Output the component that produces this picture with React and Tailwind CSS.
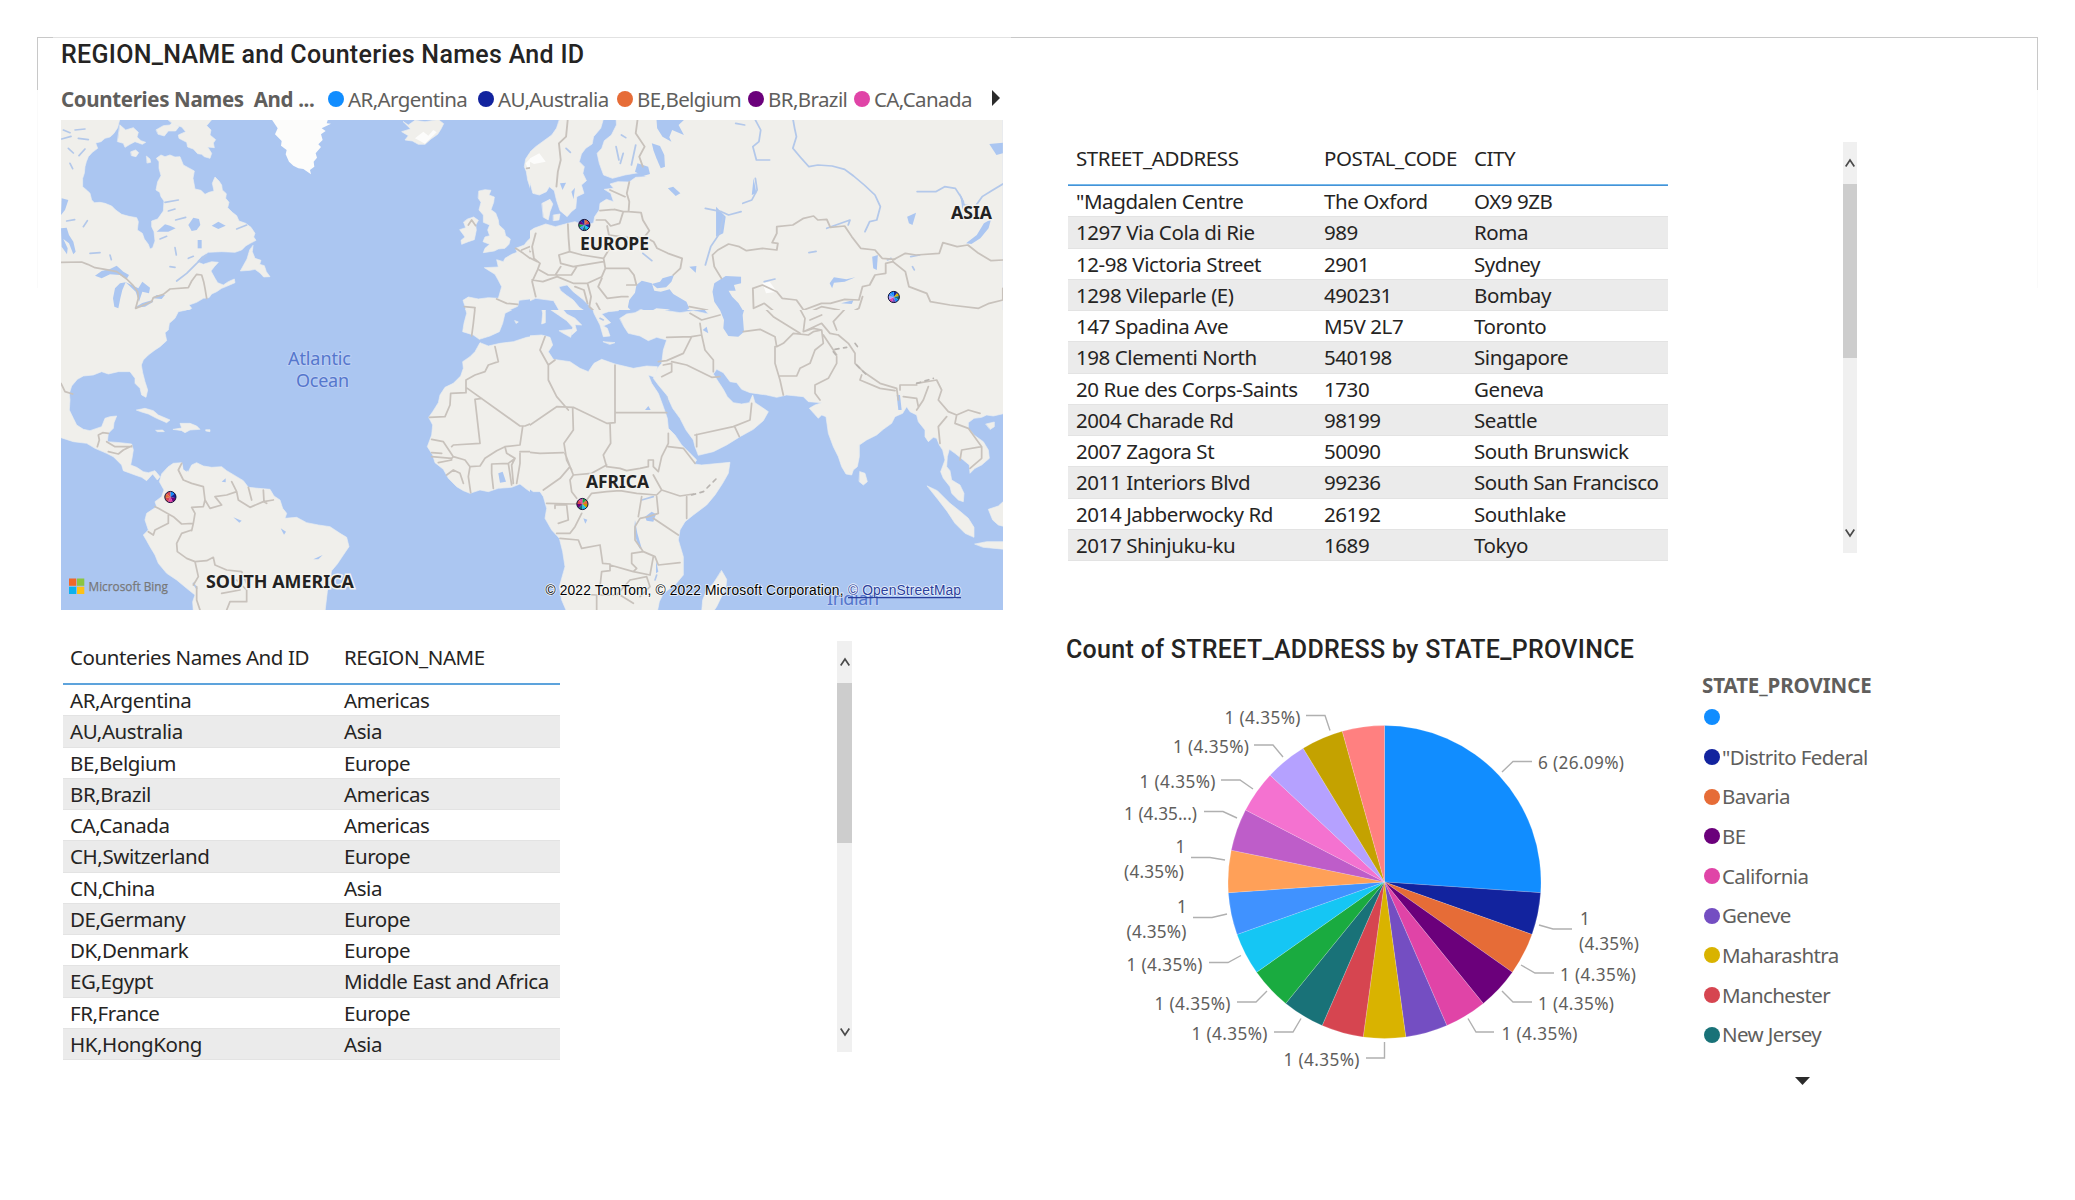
import React from "react";

const SANS = "font-['Noto_Sans','Open_Sans',sans-serif]";

const countryRows = [
  ["AR,Argentina", "Americas"],
  ["AU,Australia", "Asia"],
  ["BE,Belgium", "Europe"],
  ["BR,Brazil", "Americas"],
  ["CA,Canada", "Americas"],
  ["CH,Switzerland", "Europe"],
  ["CN,China", "Asia"],
  ["DE,Germany", "Europe"],
  ["DK,Denmark", "Europe"],
  ["EG,Egypt", "Middle East and Africa"],
  ["FR,France", "Europe"],
  ["HK,HongKong", "Asia"],
];

const addressRows = [
  ['"Magdalen Centre', "The Oxford", "OX9 9ZB"],
  ["1297 Via Cola di Rie", "989", "Roma"],
  ["12-98 Victoria Street", "2901", "Sydney"],
  ["1298 Vileparle (E)", "490231", "Bombay"],
  ["147 Spadina Ave", "M5V 2L7", "Toronto"],
  ["198 Clementi North", "540198", "Singapore"],
  ["20 Rue des Corps-Saints", "1730", "Geneva"],
  ["2004 Charade Rd", "98199", "Seattle"],
  ["2007 Zagora St", "50090", "South Brunswick"],
  ["2011 Interiors Blvd", "99236", "South San Francisco"],
  ["2014 Jabberwocky Rd", "26192", "Southlake"],
  ["2017 Shinjuku-ku", "1689", "Tokyo"],
];

const mapLegend = [
  ["AR,Argentina", "bg-[#118dff]", "w-[150px]"],
  ["AU,Australia", "bg-[#12239e]", "w-[139px]"],
  ["BE,Belgium", "bg-[#e66c37]", "w-[131px]"],
  ["BR,Brazil", "bg-[#6b007b]", "w-[106px]"],
  ["CA,Canada", "bg-[#e044a7]", "w-[137px]"],
];

const stateLegend = [
  ["", "bg-[#118dff]"],
  ['"Distrito Federal', "bg-[#12239e]"],
  ["Bavaria", "bg-[#e66c37]"],
  ["BE", "bg-[#6b007b]"],
  ["California", "bg-[#e044a7]"],
  ["Geneve", "bg-[#744ec2]"],
  ["Maharashtra", "bg-[#d9b300]"],
  ["Manchester", "bg-[#d64550]"],
  ["New Jersey", "bg-[#197278]"],
];

const slices = [
  [6, "#118dff"], [1, "#12239e"], [1, "#e66c37"], [1, "#6b007b"], [1, "#e044a7"],
  [1, "#744ec2"], [1, "#d9b300"], [1, "#d64550"], [1, "#197278"], [1, "#1aab40"],
  [1, "#15c6f4"], [1, "#4092ff"], [1, "#ffa058"], [1, "#be5dc9"], [1, "#f472d0"],
  [1, "#b5a1ff"], [1, "#c4a200"], [1, "#ff8080"],
];

const leaders = [
  "1502,772 1513,761.5 1532,761.5",
  "1539,925 1553,929 1572,929",
  "1521,965 1535,973 1554,973",
  "1502,991 1513,1002 1532,1002",
  "1468,1018.5 1476,1032 1494,1032",
  "1384.5,1042 1384.5,1058 1366,1058",
  "1301,1018.5 1293,1032 1274,1032",
  "1267,991 1256,1002 1237,1002",
  "1241,955.5 1228,962.5 1209,962.5",
  "1227,914 1212,917.5 1193,917.5",
  "1225,860 1210,857.5 1191,857.5",
  "1237,818 1223,811.5 1204,811.5",
  "1253,789 1240,780 1221,780",
  "1283,757 1273,745 1254,745",
  "1330,730.5 1325,715.5 1306,715.5",
];

const pieLabels = [
  [1538, 768.5, "6 (26.09%)", 86],
  [1580, 925, "1", 0],
  [1579, 950, "(4.35%)", 60],
  [1560, 981, "1 (4.35%)", 76],
  [1538, 1010, "1 (4.35%)", 76],
  [1501.5, 1040, "1 (4.35%)", 76],
  [1283.5, 1066, "1 (4.35%)", 76],
  [1191.5, 1040, "1 (4.35%)", 76],
  [1154.5, 1010, "1 (4.35%)", 76],
  [1126.5, 971, "1 (4.35%)", 76],
  [1177, 913, "1", 0],
  [1126.5, 938, "(4.35%)", 60],
  [1175.5, 853, "1", 0],
  [1124, 878, "(4.35%)", 60],
  [1124, 819.5, "1 (4.35...)", 73],
  [1139.5, 788, "1 (4.35%)", 76],
  [1173, 753, "1 (4.35%)", 76],
  [1224.5, 724, "1 (4.35%)", 76],
];

function wedge(cx, cy, r, from, to) {
  const at = (t) => {
    const a = t * Math.PI * 2 - Math.PI / 2;
    return `${(cx + r * Math.cos(a)).toFixed(2)},${(cy + r * Math.sin(a)).toFixed(2)}`;
  };
  return `M${cx},${cy} L${at(from)} A${r},${r} 0 ${to - from > 0.5 ? 1 : 0} 1 ${at(to)} Z`;
}

function Pie({ cx, cy, r, data, stroke }) {
  const total = data.reduce((s, d) => s + d[0], 0);
  let acc = 0;
  return (
    <g stroke={stroke} strokeWidth="0.5">
      {data.map(([v, c], i) => {
        const d = wedge(cx, cy, r, acc / total, (acc + v) / total);
        acc += v;
        return <path key={i} d={d} fill={c} />;
      })}
    </g>
  );
}

const markers = [
  [584.3, 225, ["#e66c37", "#d64550", "#12239e", "#15c6f4", "#197278", "#4092ff", "#1aab40", "#6b007b", "#12239e"]],
  [893.8, 297, ["#12239e", "#d9b300", "#197278", "#118dff", "#744ec2", "#e044a7", "#b5a1ff", "#4092ff", "#118dff"]],
  [170.4, 497, ["#118dff", "#12239e", "#6b007b", "#e044a7", "#d64550", "#e66c37", "#d64550"]],
  [582.4, 504, ["#1aab40", "#e66c37", "#c4a200", "#15c6f4", "#197278", "#6b007b", "#d64550", "#e044a7"]],
];

/* Land outlines, lakes and borders, split in four quadrants that share the map's page coordinates. */
const quadrants = [
  {
    id: "nw", clip: [61, 120, 469, 190], transform: "translate(55 115) scale(0.33333)",
    land: [
      "M18,10 L195,10 188,38 176,56 165,66 150,70 138,80 122,84 128,100 112,112 100,125 94,140 90,155 88,175 83,190 83,215 98,228 105,235 110,255 118,263 135,262 150,265 170,273 182,285 200,298 222,304 245,308 250,320 247,345 262,355 268,372 280,388 285,402 293,398 300,378 297,350 290,335 290,318 308,312 325,288 327,258 318,245 314,232 303,225 308,200 318,182 312,160 312,140 304,130 318,120 330,125 345,120 360,126 375,125 385,150 400,158 418,168 414,190 420,222 438,226 450,238 462,232 477,228 472,205 480,186 492,198 500,210 502,225 514,236 512,250 522,262 518,278 532,292 545,302 552,318 572,325 588,337 600,355 596,366 603,376 586,385 573,392 560,405 540,412 500,410 460,412 440,424 425,440 445,448 470,440 490,442 478,455 468,468 480,490 488,503 505,510 520,500 538,492 540,503 515,514 500,520 485,530 470,537 462,548 445,550 425,562 402,570 410,580 395,590 385,610 18,610Z",
      "M594,392 L592,410 600,430 618,436 614,448 628,452 634,470 645,485 626,486 615,474 600,463 585,466 556,468 566,450 576,432 584,405Z",
      "M195,30 L212,45 235,38 250,52 246,66 258,77 272,82 262,88 240,80 225,88 210,97 205,85 188,80Z",
      "M228,110 l14,-5 9,8 -8,12 -13,-3z", "M275,124 l10,8 2,10 -10,2z",
      "M304,44 L325,32 345,30 352,22 372,35 362,48 340,48 328,63 310,58Z",
      "M335,10 L450,10 470,14 455,32 468,45 465,60 482,74 475,84 478,98 458,96 470,115 465,130 448,125 440,118 428,116 415,102 398,96 395,82 372,70 370,60 392,50 380,36 355,28Z",
      "M1045,20 L1060,30 1080,16 1110,20 1150,14 1166,26 1158,42 1148,58 1128,72 1110,88 1090,88 1072,78 1050,75 1060,62 1040,50 1066,42Z",
      "M1272,228 L1290,224 1308,226 1302,240 1318,246 1316,262 1308,284 1322,294 1330,315 1332,330 1348,345 1352,362 1366,372 1362,388 1350,400 1330,402 1318,408 1285,413 1290,400 1304,388 1284,380 1290,366 1304,362 1298,345 1304,330 1285,322 1285,300 1272,285 1278,262 1270,250Z",
      "M1238,312 L1256,306 1270,316 1262,330 1264,345 1258,374 1240,380 1220,388 1218,376 1230,366 1214,344 1232,338 1226,322Z",
      "M1510,50 L1482,72 1465,88 1445,102 1425,112 1412,132 1408,155 1414,170 1418,195 1426,220 1430,235 1446,242 1462,230 1480,222 1510,205Z",
      "M1510,250 L1480,256 1464,264 1458,285 1462,300 1470,318 1465,335 1444,345 1438,358 1415,380 1408,390 1382,400 1386,412 1370,418 1350,430 1345,440 1325,434 1330,456 1288,458 1320,478 1330,496 1340,515 1330,550 1300,548 1270,552 1240,546 1224,556 1232,580 1226,610 1340,610 1352,590 1388,574 1392,556 1440,550 1450,555 1475,545 1510,552Z",
    ],
    ice: ["M648,10 L820,10 815,25 828,26 800,40 812,48 798,58 803,75 790,88 798,96 782,115 786,128 776,140 778,155 765,165 768,178 745,162 730,160 715,152 702,140 692,118 695,105 678,92 680,78 660,58 668,40Z", "M1080,70 L1105,50 1120,62 1135,45 1145,52 1110,86Z", "M1412,145 L1440,115 1450,125 1468,135 1440,150 1418,160Z"],
    water: [
      "M120,482 L140,468 165,462 185,452 205,470 222,480 215,492 195,480 165,478 140,490Z",
      "M180,520 L195,505 212,502 202,525 196,550 190,580 178,575 174,550Z",
      "M212,502 L235,512 250,520 262,500 285,518 282,535 262,530 252,560 242,530Z",
      "M238,578 L262,564 290,556 295,560 270,575Z", "M292,550 L305,540 330,540 320,552Z",
      "M18,340 L35,338 42,360 55,380 62,410 55,418 42,385 25,372 38,400 36,418 20,395Z",
      "M20,250 L40,255 30,285 18,300Z",
      "M305,350 L330,328 345,332 362,340 340,350Z", "M400,330 L415,308 432,312 436,330 425,345 410,348Z", "M470,332 L490,320 512,332 490,342Z", "M428,375h12v25h-12z",
    ],
    streams: [
      "M455,420 L425,445 395,475 365,498", "M330,262 L370,255", "M340,288 l20,-6", "M362,315 l30,-8", "M545,342 l30,-12", "M315,372 l20,-8", "M345,455 l15,2", "M360,398 l4,22", "M400,430 l15,-6", "M25,45 l20,8 M60,45 l30,-3 M70,70 l30,4 M20,72 l28,-8 M40,100 l15,14 M72,122 l18,-20 M45,145 l8,16 M35,318 l24,-4 M85,335 l12,-18 M105,415 l30,-2 M165,420 l4,14",
    ],
    borders: [
      "M18,442 L80,441 98,448 120,458 150,463 185,470 215,492 235,512 248,530 250,550 242,580 270,568 290,560 295,548 325,538 345,522 400,518 410,498 425,478 440,480 446,500 450,520 455,550",
      "M1240,330 L1250,315 1262,332", "M1382,400 L1405,415 1425,430 1452,440 1448,462 1430,495 M1445,355 L1432,385 1425,410 M1400,405 L1425,395 M1430,495 L1440,545 M1430,495 L1455,500 1480,492 1505,480 M1448,465 L1470,480 1500,475 M1325,552 L1355,565 1388,568 M1228,575 L1260,578 1255,610 M1415,160 L1450,155",
    ],
  },
  {
    id: "ne", clip: [530, 120, 473, 190], transform: "translate(500 20) scale(0.35714 0.33333)",
    land: [
      "M168,295 L290,295 282,325 262,350 258,372 240,385 228,402 222,425 236,440 232,460 242,482 228,495 235,520 215,530 212,565 200,575 188,590 168,572 158,540 152,512 138,500 130,515 110,525 92,520 82,480 75,440 70,410 100,380 145,345 158,325Z",
      "M325,295 L326,315 312,345 292,362 285,385 272,400 278,430 290,465 315,475 350,465 388,458 410,470 380,472 362,486 330,485 308,492 318,505 292,508 310,520 318,545 298,538 280,550 278,570 265,590 262,608 240,618 210,605 190,610 155,620 128,612 95,625 75,640 65,662 45,680 25,700 0,725 0,850 30,858 72,848 100,835 120,838 150,842 165,870 200,905 270,905 255,895 240,875 222,862 205,840 185,825 170,812 165,800 188,795 205,815 232,838 255,862 275,905 600,905 1408,905 1408,295Z",
      "M118,550 L140,538 148,552 140,575 135,600 122,592Z", "M150,585 L168,582 165,600 150,602Z",
    ],
    ice: ["M75,420 L110,400 128,425 95,432Z", "M735,790 L755,785 775,815 745,820Z"],
    water: [
      "M438,295 L520,295 500,315 515,345 482,330 474,352 480,365 455,350 440,325Z",
      "M385,430 L415,440 420,462 400,468 378,455Z", "M425,370 L448,378 460,405 462,440 450,445 438,415 430,392Z",
      "M397,782 L425,790 432,812 450,815 475,808 485,822 522,845 530,865 510,880 470,868 438,865 420,875 395,868 370,875 358,862 362,840 378,818 382,795Z",
      "M425,792 L448,785 455,775 487,765 480,785 465,802 440,805Z",
      "M600,790 L632,768 675,770 675,790 655,795 660,812 640,812 650,830 668,850 685,880 692,905 625,905 622,880 600,845 595,815Z",
      "M280,905 L295,885 340,888 375,878 370,890 335,905Z",
      "M923,790 L935,772 970,778 995,772 965,785 935,788 930,805Z", "M1305,670 L1335,645 1355,610 1375,598 1368,625 1345,655 1320,672Z",
      "M1370,372 L1408,368 1408,400 1390,405Z", "M470,505 L485,500 505,520 492,528Z", "M605,560 L632,590 625,640 605,650Z", "M1042,710 L1058,705 1055,750 1045,745Z", "M1140,590 L1165,578 1155,615 1145,610Z", "M955,850 L990,840 985,852Z",
      "M710,475 L718,520 705,525Z", "M1288,520 L1300,545 1295,570Z", "M168,490 L185,488 175,510Z", "M200,515 l10,-12 -4,35z", "M530,740 L550,738 548,758Z",
    ],
    streams: [
      "M820,295 L825,325 830,350 820,385 840,410 865,440 890,435 930,438 965,448 990,468 1020,495 1050,525 1065,560 1055,600 1035,605 1022,635", "M715,300 L730,330 725,365 708,380 718,420 755,420", "M715,475 L720,510 705,540 680,550", "M575,565 L620,575 640,585 675,575 M625,590 L615,640 590,680 575,735", "M1168,515 L1220,515 1245,500 1275,505 1290,530 1300,555 1330,560 1350,530 1380,510 1408,492", "M915,625 L980,600 975,615 M1085,720 l10,-5 M400,700 l25,22 M340,345 l12,8 M325,380 l8,40 M345,400 l-8,30 M380,375 l-12,60 M185,385 l12,12 M1150,710 l25,-5 M1155,740 l5,10 M865,698 l20,-4 M660,310 l25,5 M740,785 l30,-8",
    ],
    borders: [
      "M190,295 L185,350 165,370 170,420 162,455 158,500", "M385,300 L380,340 405,380 390,410 400,440", "M362,486 L355,520 362,545 360,575 345,575 320,568 280,572 M308,510 L350,530 M320,568 L345,575 335,610 310,618 295,600 270,600 M360,575 L395,578 400,600 418,632 405,650 430,665 440,685 470,700 510,715 505,745 485,765",
      "M190,612 L192,655 195,695 230,705 290,715 310,680 305,645 300,618 M305,645 L375,655 405,650 M290,715 L295,745 340,745 360,745 375,765 382,795 355,795 M195,695 L165,705 170,730 205,740 290,725 M170,740 L155,765 200,765 215,740 M110,750 L135,765 165,765 M60,680 L85,695 M100,640 L90,680 95,715 112,730 105,750 90,785 100,830 M40,690 L105,725 M90,780 L120,785 160,770 M160,770 L205,790 245,790 285,770 295,745 M245,790 L255,830 250,860 270,880 M285,775 L275,800 300,835 340,830 358,830 M210,800 L235,810 245,850 M270,850 L285,880 345,875 M530,860 L580,870 605,890 M550,885 L580,900",
      "M620,775 L600,740 595,705 610,690 640,672 670,680 690,692 735,685 775,690 778,670 762,668 775,640 775,620 820,615 850,595 878,588 890,600 915,598 925,622 965,618 985,650 1010,685 1050,690 1070,715 1105,718",
      "M1100,720 L1135,700 1165,705 1230,700 1240,668 1280,680 1310,675 1340,700 1375,722 1408,720",
      "M1100,725 L1135,755 1145,800 1195,820 1205,845 1260,855 1340,865 1370,850 1408,840 1408,805",
      "M710,865 L708,805 735,795 775,815 790,835 830,840 850,870 900,850 925,850 965,838 1005,840 1015,800 1035,795 1050,765 1080,760 1080,730 1100,725 M710,865 L740,850 780,885 M860,880 L900,860 950,870 M885,905 L920,880 945,890 M1015,830 L1005,865 950,895",
    ],
  },
  {
    id: "sw", clip: [61, 310, 469, 300], transform: "translate(40 300) scale(0.33333)",
    land: [
      "M60,-10 L450,-10 448,20 440,30 415,35 405,55 388,70 385,90 375,98 380,122 360,140 345,150 325,165 310,180 304,195 308,218 315,245 323,270 318,292 305,285 300,265 285,250 285,235 270,215 235,215 205,222 185,215 160,225 130,228 112,238 95,258 88,280 90,300 88,330 100,355 110,375 130,388 150,392 185,380 195,355 210,350 230,348 222,368 220,385 205,400 202,425 240,428 275,432 280,450 276,475 272,495 290,502 310,515 325,518 345,512 360,530 352,540 338,522 320,542 305,532 285,525 250,512 245,495 220,470 200,460 165,445 140,430 100,425 60,412Z",
      "M290,330 L315,325 340,332 355,345 390,360 380,368 350,355 325,342 305,336Z", "M400,388 L425,384 420,370 450,370 470,378 480,388 450,390 435,398 425,392Z", "M498,389 l12,0 0,6 -12,-2z", "M348,391 l20,-1 5,5 -20,0z",
      "M385,500 L400,490 425,488 430,505 445,515 455,495 470,488 490,498 515,502 545,500 560,512 590,530 610,542 625,562 655,565 690,568 702,588 720,600 728,625 740,640 735,655 770,652 800,668 835,675 870,680 900,700 920,712 927,740 910,765 892,792 875,812 868,840 862,875 855,935 460,935 458,905 465,885 440,865 410,840 380,820 355,790 345,765 330,740 320,722 310,705 325,690 315,660 320,640 350,620 345,605 365,590 372,570 358,545 365,522Z",
      "M1268,-10 L1275,20 1280,40 1272,70 1268,95 1300,105 1318,118 1350,108 1378,95 1388,70 1395,40 1415,30 1435,12 1430,-10Z",
      "M1510,105 L1460,112 1420,125 1380,130 1345,138 1320,128 1305,155 1290,170 1268,185 1270,205 1262,228 1240,250 1215,262 1200,285 1195,308 1178,335 1166,352 1178,375 1175,405 1162,440 1178,465 1185,488 1210,508 1225,535 1250,560 1270,572 1290,580 1320,570 1345,575 1375,565 1415,562 1440,552 1460,568 1475,578 1510,580Z",
      "M1425,62l10,4 -6,4z",
    ],
    ice: [],
    water: ["M430,488 L442,488 440,515 430,508Z", "M220,-10 L242,-10 238,25 222,22Z", "M290,25 L310,5 345,-5 335,15 300,25Z", "M1375,520 L1388,515 1398,545 1380,548Z", "M580,652 L605,662 598,668Z", "M722,685 L738,695 732,704Z", "M820,778 L848,765 835,778Z", "M545,545 l12,-10 0,12z"],
    streams: ["M460,850 l10,15"],
    borders: [
      "M63,250 L75,275 98,282", "M172,440 L178,420 175,405 188,398 205,400 M200,425 L225,440 275,440 M205,455 L235,462 250,450 275,438",
      "M425,490 L415,510 430,540 455,550 490,560 495,600 490,620 455,622 465,640 460,670 425,672 400,650 355,625 345,620 M460,670 L455,692 M385,645 L385,670 345,690 340,705 325,695 M455,690 L425,700 410,730 412,755 440,775 465,785 500,782 520,772 525,795 560,810 605,815 620,850 M495,600 L510,625 545,615 525,590 560,585 590,575 575,545 M590,575 L595,600 630,622 670,605 700,600 M625,562 L635,600 M670,570 L672,605 680,610 M465,785 L475,830 460,855 M470,860 L470,900 480,930 M560,930 L570,905 620,905 620,870 590,840 M545,880 L600,870",
      "M1275,22 L1305,25 1300,70 1295,108 M1380,0 L1430,15 M1365,140 L1375,185 1345,195 1335,215 1305,225 1278,240 1278,278 1232,280 1230,315 1215,350 1168,352 M1278,262 L1440,378 1455,378 1500,360 M1325,295 L1305,298 1320,430 1240,435 1235,440 M1175,418 L1210,425 1240,470 M1175,458 L1205,460 M1175,470 L1235,475 1240,470 1275,480 1290,500 M1195,488 L1235,480 M1220,525 L1240,510 1260,520 1270,550 M1290,500 L1285,530 1292,578 M1290,500 L1320,498 1335,475 1370,452 1395,440 1440,435 1448,380 M1395,440 L1400,460 1425,475 1405,490 1355,492 1355,520 1360,565 M1405,490 L1415,555 M1425,475 L1415,495 1420,550 M1440,455 L1500,455 M1440,460 L1440,490 1430,550",
    ],
  },
  {
    id: "se", clip: [530, 310, 473, 300], transform: "translate(520 300) scale(0.33333)",
    land: [
      "M62,12 L78,10 76,35 76,68 65,72 68,40Z", "M118,92 L158,88 152,112 130,100Z",
      "M55,-10 L100,-10 122,20 140,42 165,55 185,75 165,74 170,92 155,105 158,82 140,62 115,45 90,28 72,0Z",
      "M170,-10 L200,-10 215,15 222,40 240,75 250,110 270,108 262,85 250,78 272,68 245,42 265,35 295,32 310,10 340,-10Z",
      "M250,125 l35,3 -15,5z",
      "M300,55 L320,42 345,38 370,25 400,18 440,32 480,38 520,32 565,42 540,10 520,-10 1455,-10 1455,340 1420,348 1400,345 1385,352 1362,355 1345,368 1345,385 1362,405 1390,425 1405,450 1408,475 1385,495 1365,505 1350,520 1348,495 1330,480 1305,460 1288,448 1282,470 1280,500 1290,512 1295,540 1320,555 1332,580 1330,605 1315,600 1295,580 1290,560 1270,535 1262,515 1275,480 1268,450 1258,435 1250,415 1240,412 1225,425 1215,410 1215,390 1195,365 1190,345 1170,335 1160,320 1148,340 1125,350 1115,370 1090,388 1070,405 1040,420 1018,435 1018,470 1012,500 1000,510 995,525 978,522 965,500 955,470 940,440 925,400 918,350 905,345 895,355 868,325 885,315 905,308 865,305 850,290 800,285 770,292 740,285 690,278 665,268 650,248 630,245 610,218 590,208 580,222 595,245 610,268 622,290 640,308 665,312 688,308 698,285 705,308 720,318 745,335 730,362 700,388 660,410 620,435 580,455 535,466 525,440 520,420 498,390 480,355 458,325 440,285 415,255 400,235 412,205 425,190 430,150 440,120 410,112 385,122 360,108 325,100 312,80Z",
      "M20,108 L65,105 90,112 98,135 85,155 100,178 150,185 180,205 205,215 222,190 245,178 285,192 340,205 380,198 412,200 405,232 385,225 395,250 415,280 430,320 442,355 445,385 465,405 485,435 510,460 530,480 522,492 545,495 630,487 625,520 608,550 585,585 560,615 520,645 495,665 480,690 475,720 490,770 490,825 465,855 430,880 418,905 412,935 140,935 125,900 118,860 135,800 128,755 118,715 95,690 75,655 80,625 70,590 60,575 40,575 20,560Z",
      "M605,812 L620,838 618,862 590,920 580,935 545,935 548,900 560,870 580,850Z",
      "M1020,515 L1035,520 1042,545 1030,555 1018,545Z",
      "M1222,558 L1252,572 1290,610 1318,632 1345,655 1362,682 1362,712 1335,700 1305,670 1282,635 1255,600Z",
      "M1455,600 L1435,618 1405,628 1418,660 1435,675 1455,680Z", "M1365,732 L1400,725 1455,725 1455,748 1390,742Z", "M1398,372 l25,-6 0,14 -12,8z",
    ],
    ice: [],
    water: ["M592,-10 L665,-10 675,20 668,45 672,95 655,110 625,108 610,85 612,60 600,30Z", "M370,-10 L530,-10 525,20 480,25 440,15 400,12 380,5Z", "M375,650 L395,635 408,642 400,665 380,662Z", "M345,660 L352,700 365,745 358,745 342,700Z", "M408,780 L415,815 408,820Z", "M375,330 L385,318 392,330Z", "M548,90 L560,80 565,100Z", "M1130,285 L1140,285 1145,330 1135,330Z", "M955,5 h35 v6 h-35z", "M190,655 l12,4 -6,12z"],
    streams: ["M365,600 L400,590 M410,825 L405,840 M240,55 L250,60 M440,290 l3,20"],
    borders: [
      "M75,110 L60,150 85,195 85,240 110,290 145,330 M85,195 L105,180 M285,195 L285,368 260,370 160,322 110,320 30,375 10,380 M288,338 L440,338 M270,370 L272,430 250,465 260,500 300,505 320,512 360,505 385,500 385,480 400,480 400,500 415,515 M158,325 L160,390 132,430 140,480 155,510 M10,380 L5,455 60,460 130,458 M135,460 L150,500 120,535 70,570 M150,500 L160,525 150,540 M160,525 L215,520 260,495 M150,540 L155,575 170,595 M80,610 L165,612 200,600 215,580 260,575 300,572 350,580 410,585 425,570 400,525 M415,515 L425,470 445,430 445,400 M445,440 L490,445 525,490 M425,570 L480,588 520,582 M500,590 L500,655 M410,590 L415,640 385,650 360,655 345,680 345,720 370,755 405,770 M365,590 L355,650 M400,655 L475,705 M405,770 L415,795 480,788 M185,640 L165,680 150,700 110,700 M105,625 L105,615 140,615 145,660 115,670 M120,715 L175,720 185,745 240,735 248,790 270,792 270,812 245,815 240,860 M270,795 L340,815 350,805 335,790 335,760 370,755 M340,815 L390,825 400,770 M130,880 L230,885 230,930 M330,840 L290,885 235,885 M330,840 L380,830 390,860 360,890 M300,885 L340,910",
      "M440,112 L515,110 490,160 440,182 415,185 M430,195 L455,190 455,215 425,230 M455,185 L500,195 575,232 600,230 M515,110 L545,105 555,150 580,180 580,215 M540,70 L545,105 M510,40 L545,60 600,45 M525,405 L640,380 690,360 695,310 M645,382 L658,410 M530,403 L530,440",
      "M670,95 L720,88 765,110 770,140 M765,140 L765,190 780,240 790,285 M780,228 L830,228 840,205 870,190 885,150 910,130 905,90 880,95 865,105 820,100 790,130 770,140 M680,25 L735,25 760,50 840,100 M735,0 L735,25 M825,0 L855,55 850,95 905,70 930,100 955,105 M870,60 L905,45 M905,90 L880,85 850,95 M955,105 L985,130 1005,160 1005,190 1030,215 M950,170 L950,190 925,235 885,255 885,280 900,300 M910,105 L950,165 M1030,215 L1080,250 1130,265 M1025,225 L1020,240 1080,265 1125,272 M1130,265 L1135,300 M1140,270 L1140,255 1190,255 M1150,290 L1190,295 1195,320 M1190,250 L1250,240 1265,270 1255,300 1285,335 1310,345 1345,330 1380,340 M1225,260 L1210,300 1190,330 M1280,350 L1255,380 1260,430 M1310,345 L1305,370 1345,385 1385,440 1325,450 1320,480 M1385,440 L1385,475 1350,505 M1000,0 L940,65 950,90",
      "M1240,-2 L1330,10 1400,0",
    ],
    dashed: ["M940,155 L955,175 M945,148 L980,142 M1005,130 L1020,150 M1010,195 L1040,225 M1190,250 L1240,235", "M515,585 L550,575 590,535"],
  },
];

function WorldMap() {
  return (
    <svg className="block h-[490px] w-[942px]" viewBox="61 120 942 490">
      <rect x="61" y="120" width="942" height="490" fill="#abc6f1" />
      {quadrants.map((q) => (
        <g key={q.id} clipPath={`url(#clip-${q.id})`}>
          <clipPath id={`clip-${q.id}`}>
            <rect x={q.clip[0]} y={q.clip[1]} width={q.clip[2]} height={q.clip[3]} />
          </clipPath>
          <g transform={q.transform} strokeLinejoin="round" strokeLinecap="round">
            {q.land.map((d, i) => <path key={i} d={d} fill="#f0efeb" stroke="#eceef0" strokeWidth="2" />)}
            {q.ice.map((d, i) => <path key={i} d={d} fill="#fcfcfb" />)}
            {q.water.map((d, i) => <path key={i} d={d} fill="#abc6f1" />)}
            {q.streams.map((d, i) => <path key={i} d={d} fill="none" stroke="#b3c8ea" strokeWidth="5" />)}
            {q.borders.map((d, i) => <path key={i} d={d} fill="none" stroke="#c8c2bc" strokeWidth="5.2" />)}
            {(q.dashed || []).map((d, i) => <path key={i} d={d} fill="none" stroke="#b9b5b1" strokeWidth="5" strokeDasharray="12 14" />)}
          </g>
        </g>
      ))}

      <g fontFamily="'Noto Sans'" fontSize="18" fontWeight="700" fill="#222" stroke="#f4f3f0" strokeWidth="3" paintOrder="stroke">
        <text x="580" y="250" textLength="69" lengthAdjust="spacingAndGlyphs">EUROPE</text>
        <text x="951" y="219" textLength="41" lengthAdjust="spacingAndGlyphs">ASIA</text>
        <text x="586" y="488" textLength="63" lengthAdjust="spacingAndGlyphs">AFRICA</text>
        <text x="206" y="588" textLength="148" lengthAdjust="spacingAndGlyphs">SOUTH AMERICA</text>
      </g>
      <g fontFamily="'Noto Sans'" fontSize="18" fill="#5577cd" stroke="#bccff3" strokeWidth="2" paintOrder="stroke">
        <text x="288" y="365" textLength="63">Atlantic</text>
        <text x="296" y="387" textLength="53">Ocean</text>
        <text x="827" y="605" textLength="52">Indian</text>
      </g>

      {markers.map(([x, y, colors]) => (
        <g key={x}>
          <Pie cx={x} cy={y} r={5.6} data={colors.map((c) => [1, c])} stroke="none" />
          <circle cx={x} cy={y} r="5.6" fill="none" stroke="#14143a" strokeWidth="1" />
        </g>
      ))}

      <rect x="69" y="578.5" width="7.3" height="7.3" fill="#f1672a" />
      <rect x="77" y="578.5" width="7.3" height="7.3" fill="#8bc541" />
      <rect x="69" y="586.7" width="7.3" height="7.3" fill="#0cb1ee" />
      <rect x="77" y="586.7" width="7.3" height="7.3" fill="#fdc116" />
      <text x="88.5" y="591" fontFamily="'Open Sans'" fontSize="13.5" fill="#777" stroke="#777" strokeWidth="0.25" textLength="79.5" lengthAdjust="spacingAndGlyphs">Microsoft Bing</text>

      <g fontFamily="'Liberation Sans'" fontSize="13.8" stroke="#fff" strokeOpacity="0.75" strokeWidth="1.6" paintOrder="stroke">
        <text x="545.5" y="595" fill="#000" textLength="298">© 2022 TomTom, © 2022 Microsoft Corporation,</text>
        <text x="848" y="595" fill="#2a3f9c" textLength="113">© OpenStreetMap</text>
        <path d="M848,597.6 H961" stroke="#2a3f9c" strokeOpacity="1" strokeWidth="1.1" />
      </g>
    </svg>
  );
}

function Table({ header, rows, cols, className, lineClass }) {
  return (
    <div className={`${SANS} ${className} whitespace-pre text-[20.5px] tracking-[-0.42px] text-[#252423]`}>
      <div className={`grid h-[42px] leading-[33px] ${cols}`}>
        {header.map((h) => <div key={h}>{h}</div>)}
      </div>
      <div className={`h-[2px] ${lineClass}`} />
      {rows.map((r, i) => (
        <div
          key={r[0]}
          className={`grid h-[31.25px] items-center border-b border-[#e3e3e3] leading-[31px] ${cols} ${i % 2 ? "bg-[#ebebeb]" : "bg-white"}`}
        >
          {r.map((c, j) => <div key={j} className="h-[31px]">{c}</div>)}
        </div>
      ))}
    </div>
  );
}

function Chevron({ down }) {
  return (
    <svg className="h-[10px] w-[10px]" viewBox="0 0 10 10" fill="none" stroke="#4a4a4a" strokeWidth="1.7">
      <path d={down ? "M0.7,1.5 L5,8 L9.3,1.5" : "M0.7,8.5 L5,2 L9.3,8.5"} />
    </svg>
  );
}

function ScrollBar({ size, thumb }) {
  return (
    <div className={`flex flex-col items-center bg-[#f0f0f0] ${size}`}>
      <div className="flex h-[42px] shrink-0 items-center justify-center"><Chevron /></div>
      <div className={`w-full shrink-0 bg-[#cdcdcd] ${thumb}`} />
      <div className="flex-1" />
      <div className="flex h-[40px] shrink-0 items-center justify-center"><Chevron down /></div>
    </div>
  );
}

function PieChart() {
  return (
    <svg className="block h-[410px] w-[612px]" viewBox="1066 690 612 410">
      <Pie cx={1384.5} cy={882} r={156.5} data={slices} stroke="#ffffff55" />
      <g fill="none" stroke="#b0b0b0" strokeWidth="1.4">
        {leaders.map((p) => <polyline key={p} points={p} />)}
      </g>
      <g fontFamily="'Noto Sans'" fontSize="17.2" fill="#605e5c">
        {pieLabels.map(([x, y, t, w]) => (
          <text key={`${x}-${y}`} x={x} y={y} textLength={w || undefined}>{t}</text>
        ))}
      </g>
    </svg>
  );
}

export default function App() {
  return (
    <div className="h-[1200px] w-[2075px] overflow-hidden bg-white pl-[37px] pt-[37px]">
      <div className="flex h-px w-[2001px]">
        <div className="w-[16px] bg-[#c8c8c8]" />
        <div className="w-[958px] bg-[#e2e2e2]" />
        <div className="flex-1 bg-[#c8c8c8]" />
      </div>

      <div className="flex w-[2001px]">
        <div className="w-px shrink-0">
          <div className="h-[52px] bg-[#c8c8c8]" />
          <div className="h-[198px] bg-[#fafafa]" />
        </div>

        <section className="w-[1028px] shrink-0 pl-[23px]">
          <h2 className="h-[41px] whitespace-nowrap font-['Roboto',sans-serif] text-[25px] font-medium leading-[34px] tracking-[0.3px] text-[#252423]">
            REGION_NAME and Counteries Names And ID
          </h2>
          <div className={`flex h-[41px] items-start whitespace-pre text-[20.5px] leading-[40px] text-[#605e5c] ${SANS}`}>
            <div className="w-[267px] font-bold tracking-[-0.35px]">Counteries Names  And ...</div>
            {mapLegend.map(([name, color, w]) => (
              <div key={name} className={`flex shrink-0 items-center ${w}`}>
                <span className={`mr-[4px] h-[16px] w-[16px] shrink-0 rounded-full ${color}`} />
                <span className="tracking-[-0.6px]">{name}</span>
              </div>
            ))}
            <svg className="ml-px mt-[11px] h-[16px] w-[8px] shrink-0" viewBox="0 0 8 16" fill="#2b2b2b"><path d="M0,0 L8,8 L0,16Z" /></svg>
          </div>
          <WorldMap />

          <div className="flex pt-[31px]">
            <Table
              className="ml-[2px] w-[497px]"
              header={["Counteries Names And ID", "REGION_NAME"]}
              rows={countryRows}
              cols="grid-cols-[274px_1fr] pl-[7px]"
              lineClass="bg-[#5da3dc]"
            />
            <div className="w-[277px]" />
            <ScrollBar size="h-[411px] w-[15px]" thumb="h-[160px]" />
          </div>
        </section>

        <section className="w-[971px] shrink-0 pt-[104px]">
          <div className="flex">
            <Table
              className="ml-[2px] w-[600px]"
              header={["STREET_ADDRESS", "POSTAL_CODE", "CITY"]}
              rows={addressRows}
              cols="grid-cols-[248px_150px_1fr] pl-[8px]"
              lineClass="bg-gradient-to-b from-[#8ecdf5] to-[#2b7ecb]"
            />
            <div className="w-[175px]" />
            <ScrollBar size="h-[411px] w-[14px]" thumb="h-[174px]" />
          </div>

          <div className="flex pt-[70px]">
            <div className="w-[636px] shrink-0">
              <h2 className="h-[58.5px] whitespace-nowrap font-['Roboto',sans-serif] text-[25px] font-medium leading-[38px] tracking-[0.3px] text-[#252423]">
                Count of STREET_ADDRESS by STATE_PROVINCE
              </h2>
              <PieChart />
            </div>
            <div className={`w-[220px] pt-[37.5px] text-[20.5px] text-[#605e5c] ${SANS}`}>
              <div className="h-[29px] whitespace-nowrap font-bold leading-[33px] tracking-[-0.1px]">STATE_PROVINCE</div>
              {stateLegend.map(([name, color], i) => (
                <div key={i} className="flex h-[39.7px] items-center pl-[2px]">
                  <span className={`mr-[2px] h-[16px] w-[16px] shrink-0 rounded-full ${color}`} />
                  <span className="whitespace-nowrap tracking-[-0.6px]">{name}</span>
                </div>
              ))}
              <svg className="ml-[93px] mt-[22px] h-[8px] w-[15px]" viewBox="0 0 15 8" fill="#2b2b2b"><path d="M0,0 H15 L7.5,8Z" /></svg>
            </div>
          </div>
        </section>

        <div className="w-px shrink-0">
          <div className="h-[52px] bg-[#c8c8c8]" />
          <div className="h-[198px] bg-[#fafafa]" />
        </div>
      </div>
    </div>
  );
}
